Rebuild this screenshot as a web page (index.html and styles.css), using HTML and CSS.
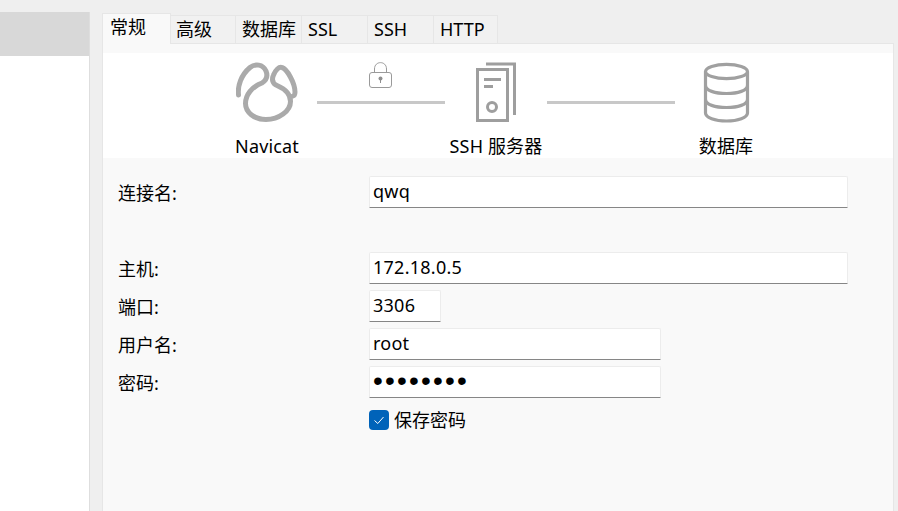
FILE: index.html
```html
<!DOCTYPE html>
<html lang="zh">
<head>
<meta charset="utf-8">
<title>连接</title>
<link rel="stylesheet" href="styles.css">
</head>
<body>
<div class="app">
  <aside class="side"><div class="side-item"></div></aside>
  <main class="main">
    <div class="tabs">
      <div class="tab tab-active">常规</div>
      <div class="tab">高级</div>
      <div class="tab">数据库</div>
      <div class="tab">SSL</div>
      <div class="tab">SSH</div>
      <div class="tab">HTTP</div>
    </div>
    <div class="panel">
      <div class="diagram">
        <div class="node node-first">
          <svg class="icon" viewBox="236 62 62 61" width="62" height="61">
            <path class="logo" d="M238.5 95C237.5 86 241 75 250 67.5C255 63.5 263 64 266 71C268 76 266.5 80 262 83C252 86.5 245.5 95 245.5 103.5C245.5 112 254 119.5 266 119.5C279 119.5 290.5 111 290.5 101.5C290.5 94 284 88.5 277 85.5C272.5 83.5 271.5 79.5 273.5 75C275.5 70 279 66.5 282 67.5C287 69 295 83 295 92C295 94 294.5 95.5 293 96"/>
          </svg>
          <div class="node-label">Navicat</div>
        </div>
        <div class="link">
          <svg class="lock" viewBox="369 62 24 27" width="24" height="27">
            <rect class="lock-line" x="369.5" y="72.5" width="22" height="15" rx="2.5"/>
            <path class="lock-line" d="M374.5 72V69C374.5 60.5 386.5 60.5 386.5 69V72"/>
            <circle class="lock-dot" cx="380.5" cy="78.5" r="2"/>
            <rect class="lock-dot" x="380" y="79" width="1" height="4"/>
          </svg>
          <div class="link-bar"></div>
        </div>
        <div class="node">
          <svg class="icon" viewBox="475 62 42 61" width="42" height="61">
            <rect class="server" x="477.5" y="69.5" width="30" height="51"/>
            <path class="server" d="M486 64H514.5V115"/>
            <path class="server" d="M484 79.5H501M484 86.5H493"/>
            <circle class="server" cx="492" cy="107" r="4.5"/>
          </svg>
          <div class="node-label">SSH 服务器</div>
        </div>
        <div class="link link-plain">
          <div class="link-bar"></div>
        </div>
        <div class="node">
          <svg class="icon" viewBox="703 62 47 61" width="47" height="61">
            <ellipse class="db" cx="726.5" cy="71.5" rx="21" ry="7.2"/>
            <path class="db" d="M705.5 71.5V113C705.5 117.5 715 121 726.5 121C738 121 747.5 117.5 747.5 113V71.5"/>
            <path class="db" d="M705.5 85.5C705.5 90.5 715 93.5 726.5 93.5C738 93.5 747.5 90.5 747.5 85.5"/>
            <path class="db" d="M705.5 99.5C705.5 104.5 715 107.5 726.5 107.5C738 107.5 747.5 104.5 747.5 99.5"/>
          </svg>
          <div class="node-label">数据库</div>
        </div>
      </div>
      <div class="form">
        <div class="row row-name">
          <label class="label">连接名:</label>
          <div class="field field-full">qwq</div>
        </div>
        <div class="row">
          <label class="label">主机:</label>
          <div class="field field-full">172.18.0.5</div>
        </div>
        <div class="row">
          <label class="label">端口:</label>
          <div class="field field-port">3306</div>
        </div>
        <div class="row">
          <label class="label">用户名:</label>
          <div class="field field-mid">root</div>
        </div>
        <div class="row">
          <label class="label">密码:</label>
          <div class="field field-mid field-pass">••••••••</div>
        </div>
        <div class="check-row">
          <span class="check">
            <svg viewBox="0 0 20 20" width="20" height="20"><path class="tick" d="M5.5 10.5L8.8 13.5L14.5 7"/></svg>
          </span>
          <span class="check-label">保存密码</span>
        </div>
      </div>
    </div>
  </main>
</div>
</body>
</html>
```

FILE: styles.css
```css
* { box-sizing: border-box; }
html, body { margin: 0; height: 100%; }
body {
  background: #efefef;
  color: #000;
  font-family: "Noto Sans", "Noto Sans CJK SC", sans-serif;
  font-size: 18px;
  overflow: hidden;
}
.app { display: flex; height: 511px; }
.side {
  width: 90px;
  margin-top: 12px;
  background: #fff;
  border-right: 1px solid #dedede;
  flex: none;
}
.side-item { height: 44px; background: #d8d8d8; }
.main {
  width: 792px;
  margin-left: 12px;
  padding-top: 12px;
  display: flex;
  flex-direction: column;
}
.tabs { display: flex; align-items: flex-end; height: 31px; position: relative; z-index: 1; }
.tab {
  width: 66px;
  height: 29px;
  margin-bottom: -1px;
  padding-left: 6px;
  background: #f1f1f1;
  border: 1px solid #e6e6e6;
  border-right: 0;
  line-height: 27px;
  white-space: nowrap;
}
.tab:last-child { border-right: 1px solid #e6e6e6; width: 65px; }
.tab-active {
  width: 69px;
  height: 31px;
  padding-left: 7px;
  background: #f9f9f9;
  border-right: 1px solid #e6e6e6;
  border-bottom: 0;
  line-height: 26px;
}
.tab-active + .tab { border-left: 0; padding-left: 5px; width: 64px; }
.panel {
  flex: 1;
  background: #f9f9f9;
  border: 1px solid #e6e6e6;
  border-bottom: 0;
  padding-top: 9px;
}
.diagram {
  height: 105px;
  background: #fff;
  display: flex;
  padding-left: 114px;
}
.node { width: 102px; flex: none; display: flex; flex-direction: column; align-items: center; padding-top: 9px; }
.node-first { width: 100px; }
.icon { display: block; flex: none; }
.logo { fill: none; stroke: #aaa; stroke-width: 5; stroke-linecap: round; stroke-linejoin: round; }
.server { fill: none; stroke: #9e9e9e; stroke-width: 3; }
.db { fill: none; stroke: #a0a0a0; stroke-width: 3.2; }
.node-label { margin-top: 11px; line-height: 25px; white-space: nowrap; letter-spacing: .15px; }
.link { width: 128px; flex: none; display: flex; flex-direction: column; align-items: center; padding-top: 9px; }
.lock { display: block; }
.lock-line { fill: none; stroke: #9a9a9a; stroke-width: 1; }
.lock-dot { fill: #8f8f8f; }
.link-bar { width: 128px; height: 3px; background: #c8c8c8; margin-top: 12px; }
.link-plain .link-bar { margin-top: 39px; }
.form { padding: 18px 0 0 14px; display: flex; flex-direction: column; gap: 6px; }
.row { display: flex; align-items: center; }
.row-name { margin-bottom: 38px; }
.label { width: 252px; flex: none; line-height: 25px; padding: 2px 0 0 1px; }
.field {
  height: 32px;
  background: #fff;
  border: 1px solid #ececec;
  border-bottom: 1px solid #868686;
  padding-left: 3px;
  line-height: 28px;
  letter-spacing: .25px;
  border-radius: 2px 2px 1px 1px;
}
.field-full { width: 479px; }
.field-port { width: 72px; }
.field-mid { width: 292px; }
.field-pass { font-family: "Liberation Sans", sans-serif; font-size: 28px; letter-spacing: 2.2px; }
.check-row { display: flex; align-items: center; margin: 6px 0 0 252px; height: 20px; }
.check { width: 20px; height: 20px; border-radius: 4px; background: #0063b9; flex: none; }
.check svg { display: block; }
.tick { fill: none; stroke: #fff; stroke-width: 1; }
.check-label { margin-left: 5px; line-height: 22px; }
```
